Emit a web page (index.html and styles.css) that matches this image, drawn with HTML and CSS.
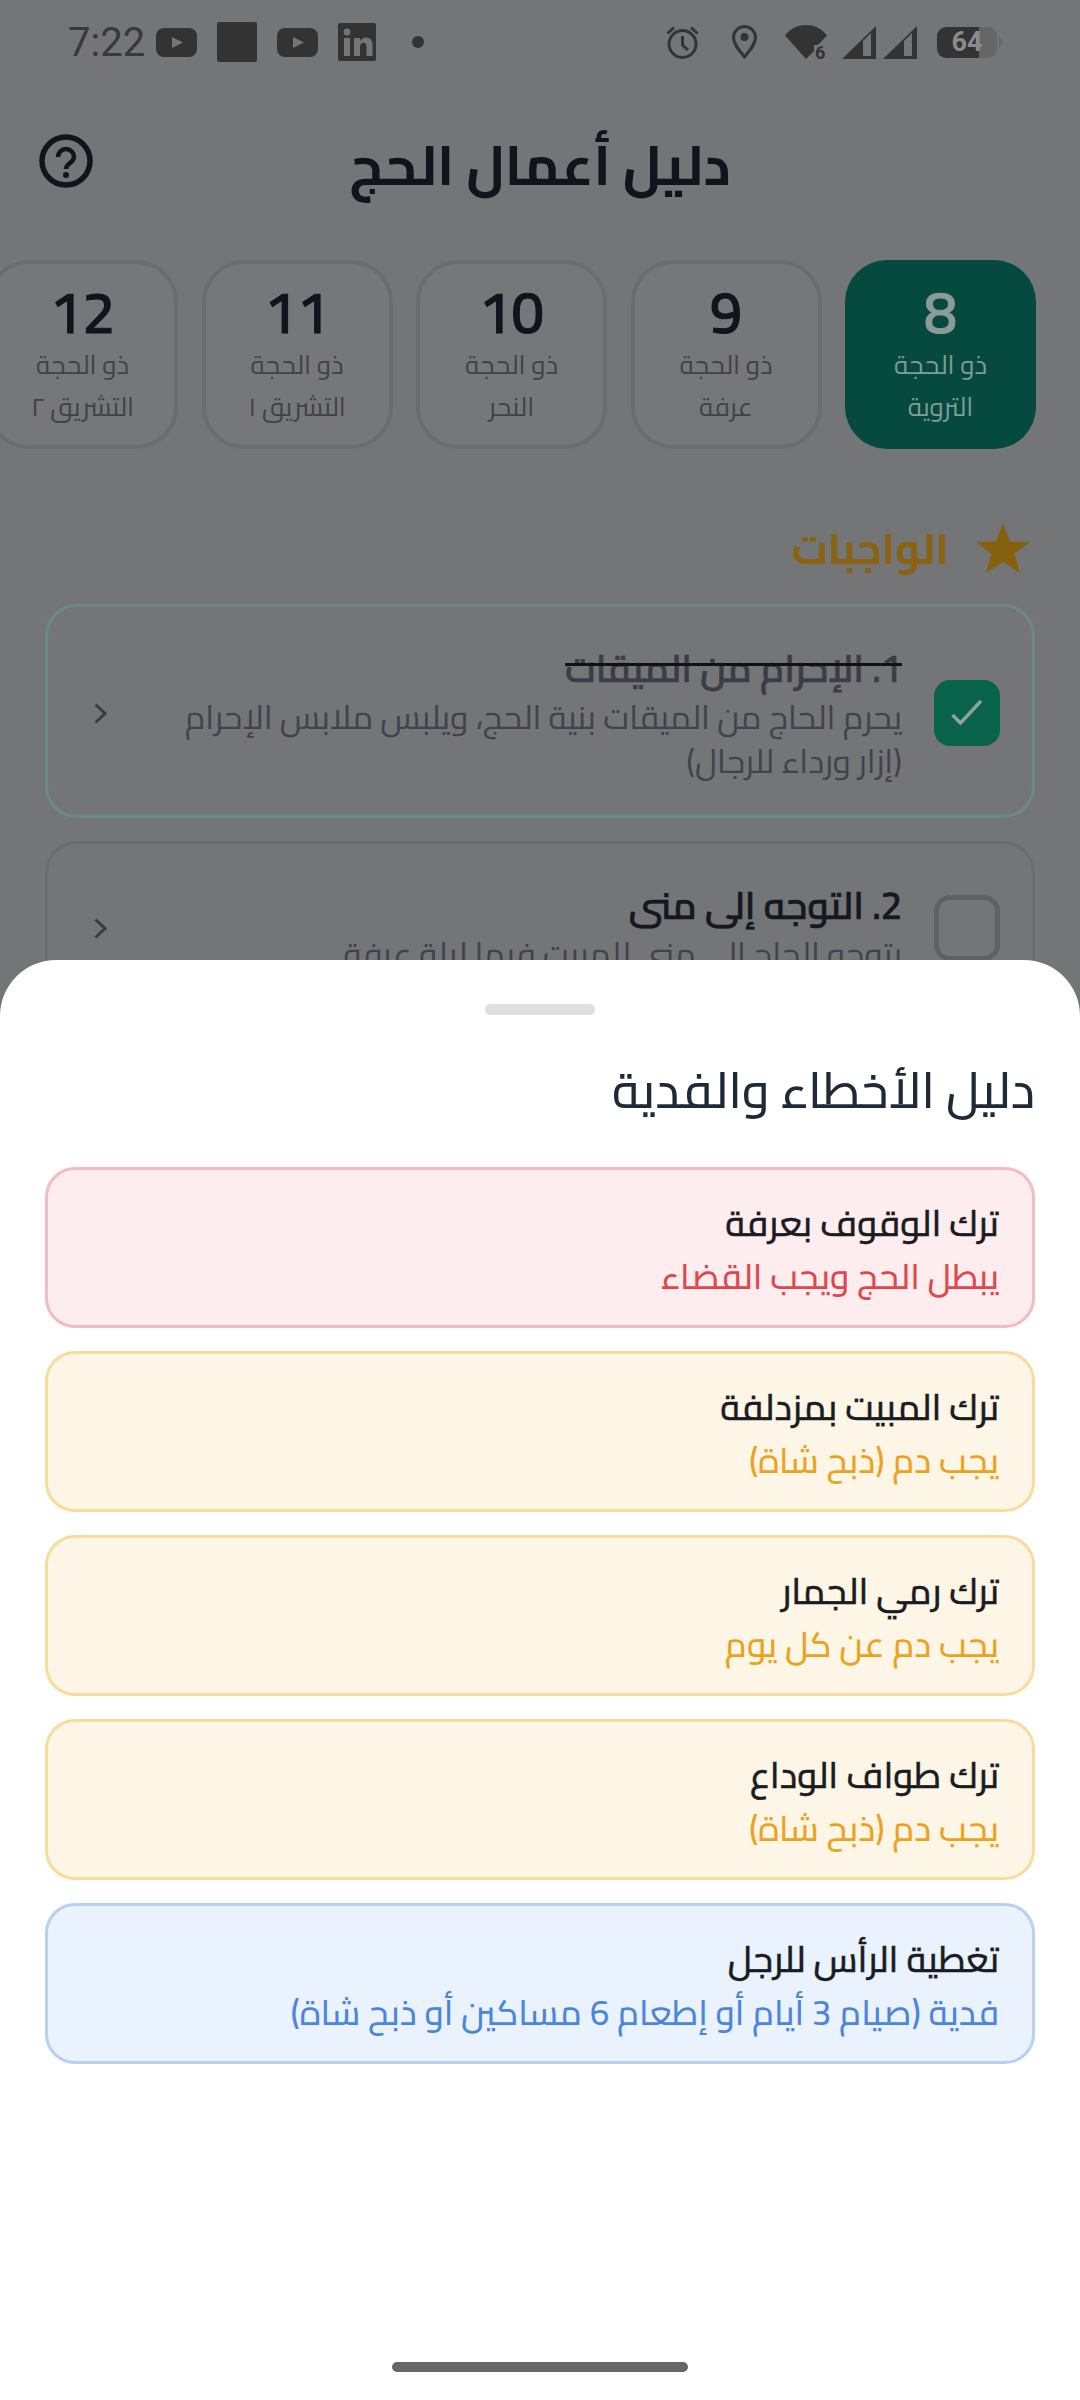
FILE: index.html
```html
<!DOCTYPE html>
<html lang="ar" dir="rtl">
<head>
    <meta charset="UTF-8">
    <meta name="viewport" content="width=device-width, initial-scale=1.0">
    <title>دليل أعمال الحج</title>
    <link rel="stylesheet" href="styles.css">
</head>
<body>
    <div class="page">
        <!-- Status bar -->
        <div class="status-bar" dir="ltr">
            <div class="status-left">
                <span class="clock">7:22</span>
                <svg class="icon-yt" viewBox="0 0 41 29"><rect width="41" height="29" rx="8" fill="#333"/><path d="M16 9l11 5.500-11 5.500z" fill="#737577"/></svg>
                <span class="app-square"></span>
                <svg class="icon-yt" viewBox="0 0 41 29"><rect width="41" height="29" rx="8" fill="#333"/><path d="M16 9l11 5.500-11 5.500z" fill="#737577"/></svg>
                <svg class="icon-in" viewBox="0 0 38 38"><rect width="38" height="38" rx="2" fill="#333"/><circle cx="9" cy="9" r="3.400" fill="#737577"/><path d="M6 15h6v18H6zM16 15h6v3c1.500-2.300 3.600-3.500 6-3.500 4.500 0 6.500 3 6.500 7.500v11h-6V23.500c0-2.300-.8-3.700-2.800-3.700S22 21.300 22 23.500V33h-6z" fill="#737577"/></svg>
                <span class="dot"></span>
            </div>
            <div class="status-right">
                <svg class="icon-alarm" viewBox="0 0 33 34" fill="none" stroke="#333" stroke-width="3"><circle cx="16.500" cy="19" r="13.500"/><path d="M16.500 11v9l5.500 5M1.500 8.500l6.500-6M31.500 8.500l-6.500-6"/></svg>
                <svg class="icon-pin" viewBox="0 0 25 34"><path d="M12.500 32C7 25 1.500 19 1.500 12.500a11 11 0 0 1 22 0C23.500 19 18 25 12.500 32z" fill="none" stroke="#333" stroke-width="3"/><circle cx="12.500" cy="12" r="4" fill="#333"/></svg>
                <svg class="icon-wifi" viewBox="0 0 42 34"><path d="M0 10.500C5 4 12.500 0 21 0s16 4 21 10.500L33 20h-4v6L21 34z" fill="#333"/><text x="30" y="33.500" class="wifi-six">6</text></svg>
                <svg class="icon-signal" viewBox="0 0 34 33"><path d="M0 33L34 0v33z" fill="#333"/><path d="M21 15l8-8v23h-8z" fill="#737577"/></svg>
                <svg class="icon-signal" viewBox="0 0 34 33"><path d="M0 33L34 0v33z" fill="#333"/><path d="M21 15l8-8v23h-8z" fill="#737577"/></svg>
                <div class="battery"><span>64</span></div>
                <span class="battery-nub"></span>
            </div>
        </div>

        <!-- Header -->
        <header class="app-header">
            <h1>دليل أعمال الحج</h1>
            <svg class="help-icon" viewBox="0 0 54 54" fill="none" stroke="#10141c" stroke-width="5.500"><circle cx="27" cy="27" r="24"/><path d="M19 23a8 8 0 0 1 16 0c0 6-8 6-8 12" stroke-width="4.500"/><circle cx="27" cy="41" r="3" fill="#10141c" stroke="none"/></svg>
        </header>

        <!-- Days -->
        <div class="days">
            <div class="day day-active"><b>8</b><small>ذو الحجة</small><span>التروية</span></div>
            <div class="day"><b>9</b><small>ذو الحجة</small><span>عرفة</span></div>
            <div class="day"><b>10</b><small>ذو الحجة</small><span>النحر</span></div>
            <div class="day"><b>11</b><small>ذو الحجة</small><span>التشريق ١</span></div>
            <div class="day"><b>12</b><small>ذو الحجة</small><span>التشريق ٢</span></div>
        </div>

        <!-- Duties -->
        <section class="duties">
            <div class="section-title">
                <svg class="star" viewBox="0 0 54 50"><path d="M27 0l7 18.500L54 19 38.500 31 44 50 27 39 10 50l5.500-19L0 19l20-.5z" fill="#85600f"/></svg>
                <h2>الواجبات</h2>
            </div>

            <div class="task task-done">
                <span class="check check-on">
                    <svg viewBox="0 0 32 28" fill="none" stroke="#8fa29c" stroke-width="3.500"><path d="M1.500 16l8 8L30 2"/></svg>
                </span>
                <div class="task-text">
                    <h3>1. الإحرام من الميقات</h3>
                    <p>يحرم الحاج من الميقات بنية الحج، ويلبس ملابس الإحرام (إزار ورداء للرجال)</p>
                </div>
                <svg class="chevron" viewBox="0 0 13 21" fill="none" stroke="#3b3d45" stroke-width="3"><path d="M1.500 1.500L11 10.500 1.500 19.500"/></svg>
            </div>

            <div class="task">
                <span class="check"></span>
                <div class="task-text">
                    <h3>2. التوجه إلى منى</h3>
                    <p>يتوجه الحاج إلى منى للمبيت فيها ليلة عرفة</p>
                </div>
                <svg class="chevron" viewBox="0 0 13 21" fill="none" stroke="#3b3d45" stroke-width="3"><path d="M1.500 1.500L11 10.500 1.500 19.500"/></svg>
            </div>
        </section>
    </div>

    <!-- Bottom sheet -->
    <div class="sheet">
        <div class="sheet-handle"></div>
        <h2 class="sheet-title">دليل الأخطاء والفدية</h2>
        <div class="penalties">
            <div class="penalty penalty-red">
                <h4>ترك الوقوف بعرفة</h4>
                <p>يبطل الحج ويجب القضاء</p>
            </div>
            <div class="penalty penalty-amber">
                <h4>ترك المبيت بمزدلفة</h4>
                <p>يجب دم (ذبح شاة)</p>
            </div>
            <div class="penalty penalty-amber">
                <h4>ترك رمي الجمار</h4>
                <p>يجب دم عن كل يوم</p>
            </div>
            <div class="penalty penalty-amber">
                <h4>ترك طواف الوداع</h4>
                <p>يجب دم (ذبح شاة)</p>
            </div>
            <div class="penalty penalty-blue">
                <h4>تغطية الرأس للرجل</h4>
                <p>فدية (صيام 3 أيام أو إطعام 6 مساكين أو ذبح شاة)</p>
            </div>
        </div>
        <div class="home-bar"></div>
    </div>
</body>
</html>
```
FILE: styles.css
```css
* {
    margin: 0;
    padding: 0;
    box-sizing: border-box;
}

body {
    width: 1080px;
    height: 2400px;
    position: relative;
    overflow: hidden;
    font-family: "Cairo", "Noto Sans Arabic", sans-serif;
    background-color: #737577;
}

/* Dimmed page behind the sheet */
.page {
    height: 2400px;
}

.status-bar {
    height: 84px;
    padding: 22px 77px 0 68px;
    display: flex;
    justify-content: space-between;
    align-items: flex-start;
}

.status-left {
    display: flex;
    align-items: center;
    gap: 20px;
    height: 40px;
}

.status-right {
    display: flex;
    align-items: center;
    height: 40px;
}

.clock {
    font-family: Roboto, sans-serif;
    font-size: 40px;
    color: #38393b;
    margin-right: -9px;
}

.icon-yt {
    width: 41px;
    height: 29px;
}

.app-square {
    width: 40px;
    height: 40px;
    border-radius: 2px;
    background-color: #333;
}

.icon-in {
    width: 38px;
    height: 38px;
}

.dot {
    width: 12px;
    height: 12px;
    border-radius: 50%;
    background-color: #333;
    margin-left: 16px;
}

.icon-alarm {
    width: 33px;
    height: 34px;
    margin-left: 1px;
}

.icon-pin {
    width: 25px;
    height: 34px;
    margin-left: 33px;
}

.icon-wifi {
    width: 42px;
    height: 34px;
    margin-left: 28px;
}

.wifi-six {
    font-family: Roboto, sans-serif;
    font-size: 18px;
    font-weight: 700;
    fill: #333;
}

.icon-signal {
    width: 34px;
    height: 33px;
    margin-left: 7px;
}

.icon-wifi + .icon-signal {
    margin-left: 15px;
}

.battery {
    width: 60px;
    height: 31px;
    margin-left: 20px;
    border-radius: 9px;
    background: linear-gradient(90deg, #333 0 70%, #666 70% 100%);
    display: flex;
    align-items: center;
    justify-content: center;
}

.battery span {
    font-family: Roboto, sans-serif;
    font-size: 27px;
    font-weight: 700;
    color: #8b8b8b;
}

.battery-nub {
    width: 0;
    height: 0;
    margin-left: 2px;
    border-left: 4px solid #666;
    border-top: 6px solid transparent;
    border-bottom: 6px solid transparent;
}

.app-header {
    height: 152px;
    padding: 0 39px 0 39px;
    display: flex;
    align-items: center;
    justify-content: flex-end;
    position: relative;
}

.app-header h1 {
    position: absolute;
    left: 0;
    right: 0;
    margin-top: 8px;
    text-align: center;
    font-size: 55px;
    font-weight: 700;
    color: #10141c;
}

.help-icon {
    width: 54px;
    height: 54px;
    margin-top: 2px;
}

/* Day chips */
.days {
    margin-top: 24px;
    padding-right: 44px;
    display: flex;
    gap: 23.5px;
}

.day {
    flex: 0 0 191px;
    height: 189px;
    border: 4px solid #6b6c6f;
    border-radius: 42px;
    background-color: #767778;
    display: flex;
    flex-direction: column;
    align-items: center;
    color: #404247;
}

.day b {
    font-size: 58px;
    font-weight: 600;
    line-height: 64px;
    margin-top: 16px;
    color: #10141c;
    -webkit-text-stroke: 1px;
}

.day small {
    font-size: 26px;
    line-height: 40px;
    margin-top: 1px;
}

.day span {
    font-size: 26px;
    line-height: 44px;
}

.day-active {
    border: none;
    background-color: #05493f;
    color: #7f9c96;
}

.day-active b {
    margin-top: 20px;
    color: #8a9c98;
}

/* Duties */
.duties {
    padding: 0 45px;
}

.section-title {
    margin-top: 74px;
    padding-right: 5px;
    height: 50px;
    display: flex;
    align-items: center;
    gap: 27px;
}

.star {
    width: 54px;
    height: 50px;
}

.section-title h2 {
    font-size: 43px;
    font-weight: 700;
    color: #8a6212;
}

.task {
    margin-top: 23px;
    padding: 36px 32px 32px 46px;
    border: 3px solid #6b6c6f;
    border-radius: 32px;
    display: flex;
    align-items: center;
    gap: 32px;
}

.task-done {
    margin-top: 31px;
    border-color: #6d8a82;
}

.check {
    flex: 0 0 66px;
    height: 66px;
    border: 5px solid #5f6163;
    border-radius: 16px;
}

.check-on {
    border: none;
    background-color: #09634b;
    display: flex;
    align-items: center;
    justify-content: center;
}

.check-on svg {
    width: 32px;
    height: 28px;
}

.task-text {
    flex: 1;
}

.task-text h3 {
    font-size: 38px;
    font-weight: 600;
    line-height: 50px;
    color: #15181f;
    -webkit-text-stroke: 0.7px;
}

.task-text p {
    margin-top: 2px;
    font-size: 33px;
    line-height: 44px;
    color: #40424d;
}

.task-done h3 {
    color: #3a3c48;
    text-decoration: line-through;
    text-decoration-color: #111;
}

.chevron {
    width: 13px;
    height: 21px;
    flex-shrink: 0;
}

/* Bottom sheet */
.sheet {
    position: absolute;
    left: 0;
    right: 0;
    top: 960px;
    bottom: 0;
    padding: 44px 45px 0;
    background-color: white;
    border-radius: 56px 56px 0 0;
}

.sheet-handle {
    width: 110px;
    height: 11px;
    margin: 0 auto;
    border-radius: 6px;
    background-color: #e0e0e0;
}

.sheet-title {
    margin-top: 34px;
    font-size: 50px;
    font-weight: 500;
    line-height: 82px;
    color: #1f2937;
}

.penalties {
    margin-top: 36px;
    display: flex;
    flex-direction: column;
    gap: 23px;
}

.penalty {
    height: 161px;
    padding: 2px 33px 0;
    border: 3px solid;
    border-radius: 30px;
    display: flex;
    flex-direction: column;
    justify-content: center;
}

.penalty h4 {
    font-size: 36px;
    font-weight: 500;
    line-height: 54px;
    color: #1a1c22;
    -webkit-text-stroke: 0.4px;
}

.penalty p {
    font-size: 35px;
    font-weight: 500;
    line-height: 52px;
}

.penalty-red {
    background-color: #fdedee;
    border-color: #f2bcc2;
}

.penalty-red p {
    color: #e0474c;
}

.penalty-amber {
    background-color: #fdf6e6;
    border-color: #f7dc9c;
}

.penalty-amber p {
    color: #eba21c;
}

.penalty-blue {
    background-color: #eaf2fe;
    border-color: #b8d0f2;
}

.penalty-blue p {
    color: #4a86dc;
}

.home-bar {
    position: absolute;
    left: 392px;
    bottom: 28px;
    width: 296px;
    height: 10px;
    border-radius: 5px;
    background-color: #666;
}
```
